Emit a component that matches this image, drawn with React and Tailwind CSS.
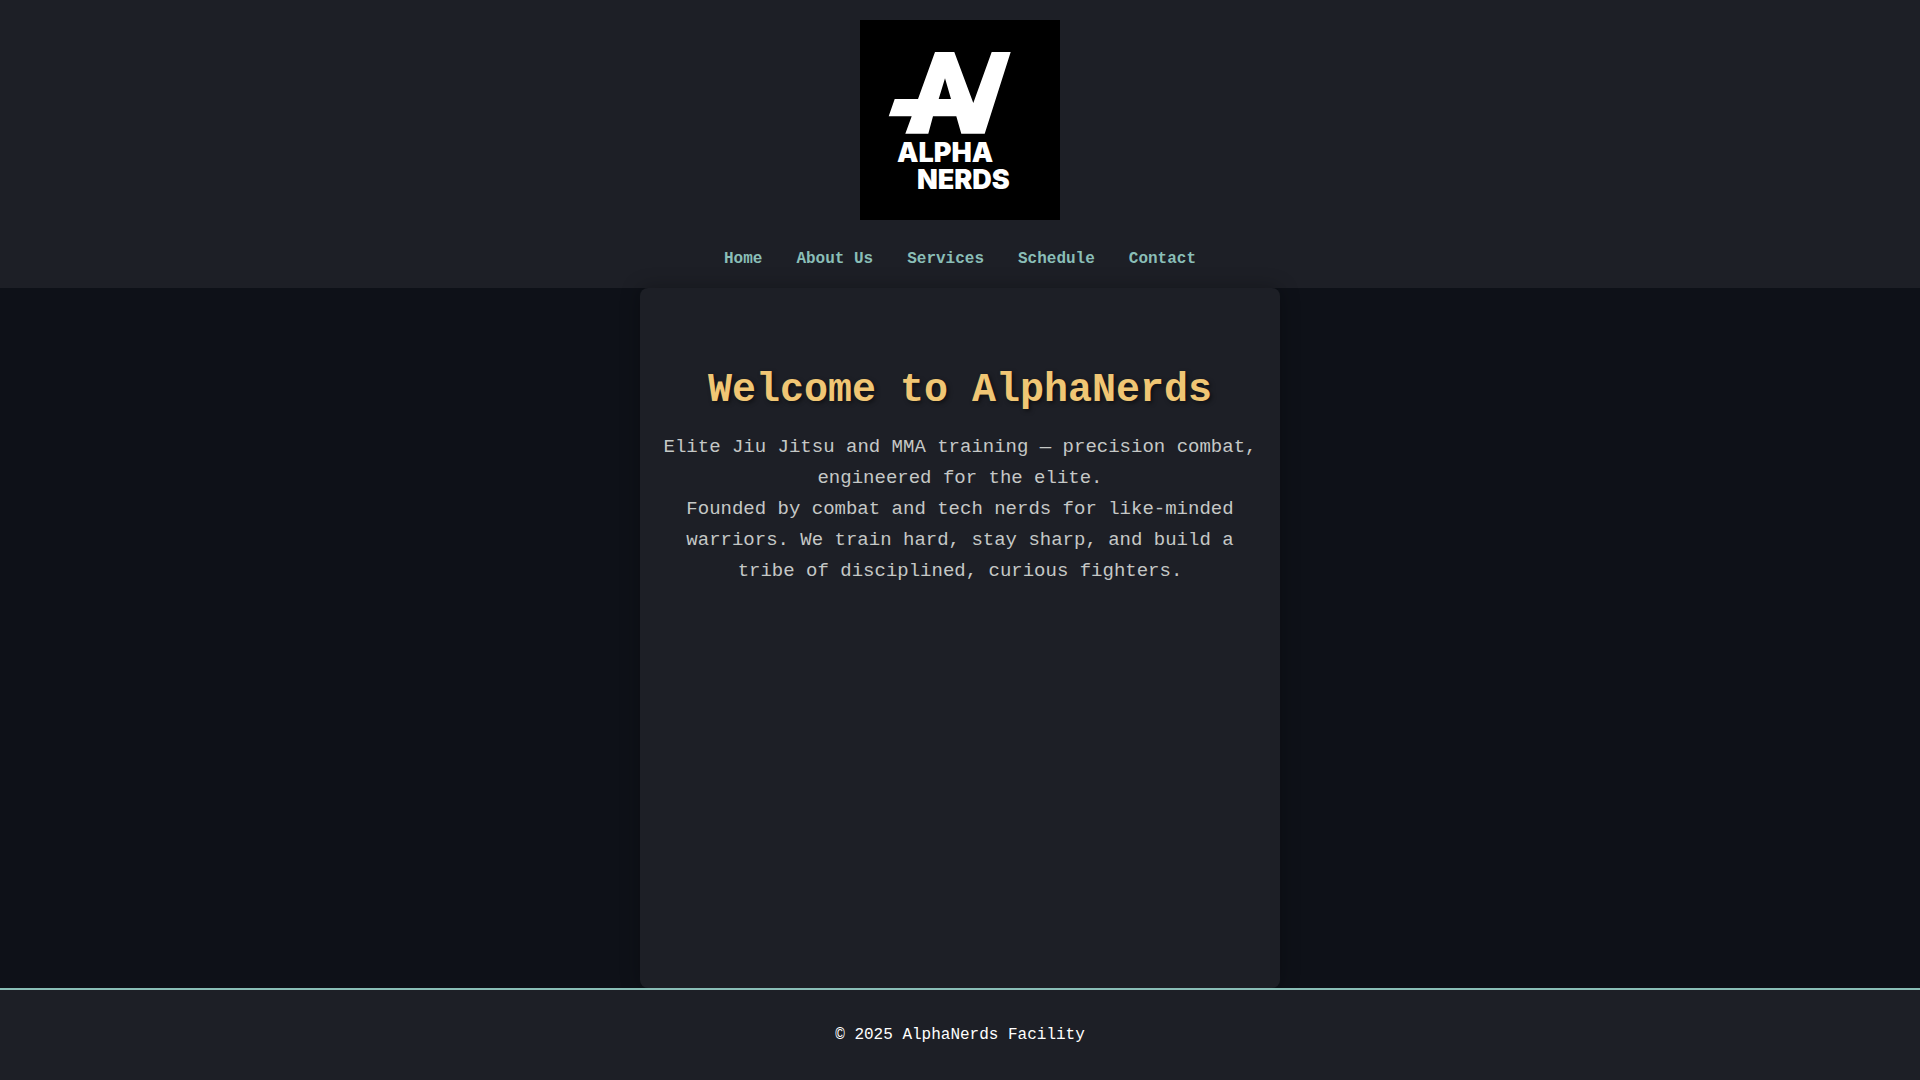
import React from "react"

const links = [
  { label: "Home", href: "#home" },
  { label: "About Us", href: "#about" },
  { label: "Services", href: "#services" },
  { label: "Schedule", href: "#schedule" },
  { label: "Contact", href: "#contact" },
]

function Logo() {
  return (
    <svg
      viewBox="0 0 200 200"
      className="size-50 bg-black fill-white"
      role="img"
      aria-label="AlphaNerds logo"
    >
      <path
        fillRule="evenodd"
        d="M75 32H94.3L113.3 83L131.7 32H150.7L124.7 113.7H101.3L96.3 96.3H73L68.3 113.7H45.3L51.7 96.3H28.7L34.7 79H58ZM85 58.3L91 79H78.7Z"
      />
      <text x="37" y="142" className="font-['Inter'] text-[27px] font-black">
        ALPHA
      </text>
      <text x="57" y="169" className="font-['Inter'] text-[27px] font-black">
        NERDS
      </text>
    </svg>
  )
}

function Header() {
  return (
    <header className="flex flex-col items-center bg-[#1d1f26] pt-5 pb-[15px]">
      <Logo />
      <nav className="mt-[25px] flex flex-wrap justify-center gap-x-[34px]">
        {links.map((link) => (
          <a
            key={link.label}
            href={link.href}
            className="leading-7 font-bold text-[#8abeb7] hover:text-[#f0c674]"
          >
            {link.label}
          </a>
        ))}
      </nav>
    </header>
  )
}

function Hero() {
  return (
    <main className="mx-auto w-full max-w-160 grow rounded-lg bg-[#1d1f26] px-4 pt-[71px] pb-16 text-center shadow-[0_0_20px_rgba(0,0,0,0.3)]">
      <h1 className="mb-[9px] text-[40px] leading-16 font-bold text-[#f0c674] [text-shadow:2px_2px_4px_rgba(0,0,0,0.5)]">
        Welcome to AlphaNerds
      </h1>
      <p className="text-[19px] leading-[31px] text-[#c5c8c6]">
        Elite Jiu Jitsu and MMA training — precision combat, engineered for the elite.
        <br />
        Founded by combat and tech nerds for like-minded warriors. We train hard, stay
        sharp, and build a tribe of disciplined, curious fighters.
      </p>
    </main>
  )
}

function Footer() {
  return (
    <footer className="border-t-2 border-[#8abeb7] bg-[#1d1f26] py-8 text-center leading-[26px] text-white">
      <p>© 2025 AlphaNerds Facility</p>
    </footer>
  )
}

export default function App() {
  return (
    <div className="flex min-h-screen flex-col bg-[#0e1118] font-['Liberation_Mono',monospace] text-base">
      <Header />
      <Hero />
      <Footer />
    </div>
  )
}
